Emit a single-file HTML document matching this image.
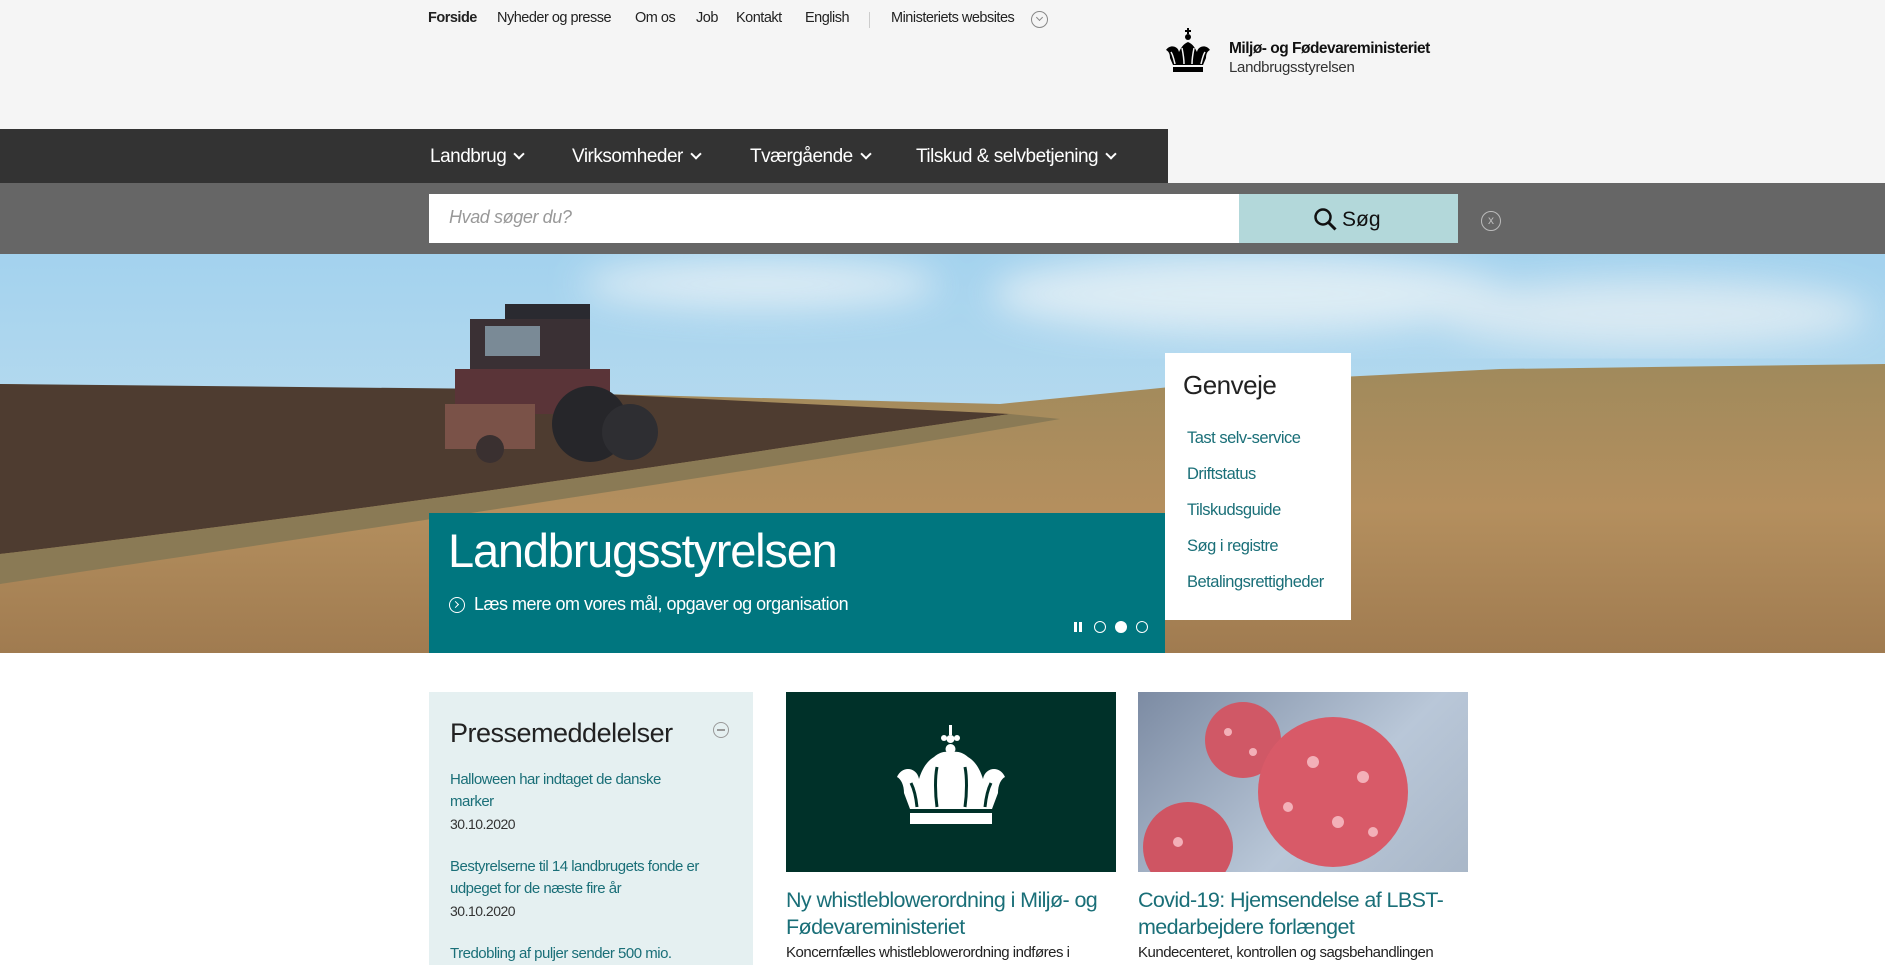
<!DOCTYPE html>
<html><head><meta charset="utf-8"><style>
*{margin:0;padding:0;box-sizing:border-box}
body{width:1885px;height:965px;overflow:hidden;background:#fff;font-family:"Liberation Sans",sans-serif;position:relative}
.abs{position:absolute}
#top{left:0;top:0;width:1885px;height:183px;background:#f5f5f5}
.tl{top:10px;font-size:14.5px;color:#222;letter-spacing:-0.5px}
#nav{left:0;top:129px;width:1168px;height:54px;background:#333}
.nv{top:146px;color:#fff;font-size:19px;letter-spacing:-0.5px}
.chev{display:inline-block;width:8px;height:8px;border-right:2px solid #fff;border-bottom:2px solid #fff;transform:rotate(45deg);margin-left:9px;position:relative;top:-4px}
#sbar{left:0;top:183px;width:1885px;height:71px;background:#666}
#hero{left:0;top:254px;width:1885px;height:399px;overflow:hidden}
#teal{left:429px;top:513px;width:736px;height:140px;background:#00767f;color:#fff}
#gen{left:1165px;top:353px;width:186px;height:267px;background:#fff}
.gl{left:22px;font-size:16.5px;color:#1a6f78;letter-spacing:-0.5px}
#press{left:429px;top:692px;width:324px;height:273px;background:#e5f0f1}
.pl{left:21px;font-size:15px;color:#1a6f78;line-height:22px;letter-spacing:-0.5px}
.pd{font-size:14px;color:#333}
.ct{font-size:21.5px;color:#1a6f78;line-height:27px;letter-spacing:-0.6px}
.cb{font-size:15px;color:#222;letter-spacing:-0.5px}
</style></head><body>
<div id="top" class="abs"></div>
<div class="abs tl" style="left:428px;font-weight:bold">Forside</div>
<div class="abs tl" style="left:497px">Nyheder og presse</div>
<div class="abs tl" style="left:635px">Om os</div>
<div class="abs tl" style="left:696px">Job</div>
<div class="abs tl" style="left:736px">Kontakt</div>
<div class="abs tl" style="left:805px">English</div>
<div class="abs" style="left:869px;top:12px;width:1px;height:16px;background:#ccc"></div>
<div class="abs tl" style="left:891px">Ministeriets websites</div>
<div class="abs" style="left:1031px;top:11px;width:17px;height:17px;border:1px solid #888;border-radius:50%"></div>
<div class="abs" style="left:1037px;top:15px;width:5px;height:5px;border-right:1px solid #888;border-bottom:1px solid #888;transform:rotate(45deg)"></div>
<svg class="abs" style="left:1162px;top:28px" width="52" height="48" viewBox="0 0 52 48">
<rect x="25" y="0" width="2" height="6"/><rect x="23" y="2" width="6" height="2"/>
<circle cx="26" cy="9" r="3"/>
<path d="M4 22c4-6 12-4 13 2 2-4 4-8 9-10 5 2 7 6 9 10 1-6 9-8 13-2-2 1-4 3-4 8l-3 7H11L8 30c0-5-2-7-4-8z"/>
<path d="M9 24c2 3 3 8 4 12M43 24c-2 3-3 8-4 12M20 20c1 5 2 10 2 16M32 20c-1 5-2 10-2 16" stroke="#f5f5f5" stroke-width="1.5" fill="none"/>
<rect x="11" y="39" width="30" height="5"/>
</svg>
<div class="abs" style="left:1229px;top:40px;font-size:15.5px;font-weight:bold;color:#111;letter-spacing:-0.5px">Miljø- og Fødevareministeriet</div>
<div class="abs" style="left:1229px;top:59px;font-size:15px;color:#333;letter-spacing:-0.3px">Landbrugsstyrelsen</div>

<div id="nav" class="abs"></div>
<div class="abs nv" style="left:430px">Landbrug<span class="chev"></span></div>
<div class="abs nv" style="left:572px">Virksomheder<span class="chev"></span></div>
<div class="abs nv" style="left:750px">Tværgående<span class="chev"></span></div>
<div class="abs nv" style="left:916px">Tilskud &amp; selvbetjening<span class="chev"></span></div>

<div id="sbar" class="abs"></div>
<div class="abs" style="left:429px;top:194px;width:810px;height:49px;background:#fff"></div>
<div class="abs" style="left:449px;top:207px;font-size:18px;font-style:italic;color:#999;letter-spacing:-0.4px">Hvad søger du?</div>
<div class="abs" style="left:1239px;top:194px;width:219px;height:49px;background:#b3d8da"></div>
<svg class="abs" style="left:1313px;top:207px" width="26" height="26" viewBox="0 0 26 26"><circle cx="10" cy="10" r="7.5" stroke="#111" stroke-width="2.5" fill="none"/><path d="M15.5 15.5l7 7" stroke="#111" stroke-width="3"/></svg>
<div class="abs" style="left:1342px;top:208px;font-size:21px;color:#111">Søg</div>
<div class="abs" style="left:1481px;top:211px;width:20px;height:20px;border:1.5px solid #bbb;border-radius:50%;color:#bbb;font-size:12px;text-align:center;line-height:17px">x</div>

<div id="hero" class="abs">
<svg width="1885" height="399" viewBox="0 0 1885 399" preserveAspectRatio="none">
<defs>
<linearGradient id="sky" x1="0" y1="0" x2="0" y2="1"><stop offset="0" stop-color="#a3d2ee"/><stop offset="1" stop-color="#cfe5f0"/></linearGradient>
<linearGradient id="gold" x1="0" y1="0" x2="0" y2="1"><stop offset="0" stop-color="#a08a5c"/><stop offset=".5" stop-color="#b48f5e"/><stop offset="1" stop-color="#a07b50"/></linearGradient>
<filter id="bl"><feGaussianBlur stdDeviation="18"/></filter>
</defs>
<rect width="1885" height="399" fill="url(#sky)"/>
<g filter="url(#bl)" opacity=".75">
<ellipse cx="760" cy="30" rx="180" ry="25" fill="#eef4f7"/>
<ellipse cx="1250" cy="40" rx="260" ry="40" fill="#eef4f7"/>
<ellipse cx="1650" cy="60" rx="220" ry="35" fill="#e8f0f4"/>
</g>
<path d="M0 130 L600 140 L1000 150 L1200 130 L1500 115 L1885 110 L1885 399 L0 399Z" fill="url(#gold)"/>
<path d="M0 130 L500 135 L1010 160 C800 190 500 240 0 300Z" fill="#4e3c30"/>
<path d="M0 300 C500 240 800 190 1010 160 L1060 165 C800 210 400 270 0 330Z" fill="#8a7a55"/>
<g>
<rect x="505" y="50" width="85" height="20" fill="#2a2a30"/>
<rect x="470" y="65" width="120" height="55" fill="#3a3034"/>
<rect x="485" y="72" width="55" height="30" fill="#7a8a96"/>
<rect x="455" y="115" width="155" height="45" fill="#5a3438"/>
<rect x="445" y="150" width="90" height="45" fill="#7a5248"/>
<circle cx="590" cy="170" r="38" fill="#26262a"/>
<circle cx="630" cy="178" r="28" fill="#2e2e32"/>
<circle cx="490" cy="195" r="14" fill="#3a3030"/>
</g>
</svg>
</div>
<div id="teal" class="abs">
<div class="abs" style="left:19px;top:10px;font-size:47px;letter-spacing:-1.2px">Landbrugsstyrelsen</div>
<div class="abs" style="left:20px;top:84px;width:16px;height:16px;border:1.5px solid #fff;border-radius:50%"></div>
<div class="abs" style="left:24px;top:89px;width:5px;height:5px;border-right:1.5px solid #fff;border-top:1.5px solid #fff;transform:rotate(45deg)"></div>
<div class="abs" style="left:45px;top:81px;font-size:18px;letter-spacing:-0.5px">Læs mere om vores mål, opgaver og organisation</div>
<div class="abs" style="left:645px;top:109px;width:3px;height:10px;background:#fff"></div>
<div class="abs" style="left:650px;top:109px;width:3px;height:10px;background:#fff"></div>
<div class="abs" style="left:665px;top:108px;width:12px;height:12px;border:1.5px solid #fff;border-radius:50%"></div>
<div class="abs" style="left:686px;top:108px;width:12px;height:12px;background:#fff;border-radius:50%"></div>
<div class="abs" style="left:707px;top:108px;width:12px;height:12px;border:1.5px solid #fff;border-radius:50%"></div>
</div>
<div id="gen" class="abs">
<div class="abs" style="left:18px;top:17px;font-size:26px;color:#222;letter-spacing:-0.5px">Genveje</div>
<div class="abs gl" style="top:76px">Tast selv-service</div>
<div class="abs gl" style="top:112px">Driftstatus</div>
<div class="abs gl" style="top:148px">Tilskudsguide</div>
<div class="abs gl" style="top:184px">Søg i registre</div>
<div class="abs gl" style="top:220px">Betalingsrettigheder</div>
</div>

<div id="press" class="abs">
<div class="abs" style="left:21px;top:26px;font-size:27px;color:#222;letter-spacing:-0.5px">Pressemeddelelser</div>
<div class="abs" style="left:284px;top:30px;width:16px;height:16px;border:1.5px solid #999;border-radius:50%"></div>
<div class="abs" style="left:288px;top:37px;width:8px;height:1.5px;background:#999"></div>
<div class="abs pl" style="top:77px;width:235px">Halloween har indtaget de danske marker<br><span class="pd">30.10.2020</span></div>
<div class="abs pl" style="top:164px;width:290px">Bestyrelserne til 14 landbrugets fonde er udpeget for de næste fire år<br><span class="pd">30.10.2020</span></div>
<div class="abs pl" style="top:251px">Tredobling af puljer sender 500 mio.</div>
</div>

<div class="abs" style="left:786px;top:692px;width:330px;height:180px;background:#003129"></div>
<svg class="abs" style="left:891px;top:725px" width="120" height="104" viewBox="0 0 120 104">
<g fill="#fff">
<rect x="58" y="0" width="3" height="10"/><circle cx="59.5" cy="14" r="4"/><circle cx="53" cy="13" r="3"/><circle cx="66" cy="13" r="3"/>
<circle cx="59.5" cy="24" r="5"/>
<path d="M6 52c5-12 20-10 22 2 3-10 8-18 15-22 7-6 14-6 17-4 3-2 10-2 17 4 7 4 12 12 15 22 2-12 17-14 22-2-4 2-7 8-7 16l-6 16H19l-6-16c0-8-3-14-7-16z"/>
<rect x="19" y="88" width="82" height="11"/>
</g>
<path d="M20 58c3 6 5 14 6 24M100 58c-3 6-5 14-6 24M46 42c-2 10-2 26 0 40M74 42c2 10 2 26 0 40" stroke="#003129" stroke-width="3" fill="none"/>
</svg>
<div class="abs" style="left:1138px;top:692px;width:330px;height:180px;background:linear-gradient(135deg,#7c8ba3,#b9c7d8 60%,#a9b7c8)"></div>
<svg class="abs" style="left:1138px;top:692px" width="330" height="180">
<circle cx="105" cy="48" r="38" fill="#d05866"/>
<circle cx="195" cy="100" r="75" fill="#d85a68"/>
<circle cx="50" cy="155" r="45" fill="#cf5563"/>
<g fill="#f3b0b8"><circle cx="175" cy="70" r="6"/><circle cx="225" cy="85" r="6"/><circle cx="200" cy="130" r="6"/><circle cx="150" cy="115" r="5"/><circle cx="235" cy="140" r="5"/><circle cx="90" cy="40" r="4"/><circle cx="115" cy="60" r="4"/><circle cx="40" cy="150" r="5"/></g>
</svg>
<div class="abs ct" style="left:786px;top:887px;width:320px">Ny whistleblowerordning i Miljø- og Fødevareministeriet</div>
<div class="abs cb" style="left:786px;top:944px">Koncernfælles whistleblowerordning indføres i</div>
<div class="abs ct" style="left:1138px;top:887px;width:320px">Covid-19: Hjemsendelse af LBST-medarbejdere forlænget</div>
<div class="abs cb" style="left:1138px;top:944px">Kundecenteret, kontrollen og sagsbehandlingen</div>
</body></html>
